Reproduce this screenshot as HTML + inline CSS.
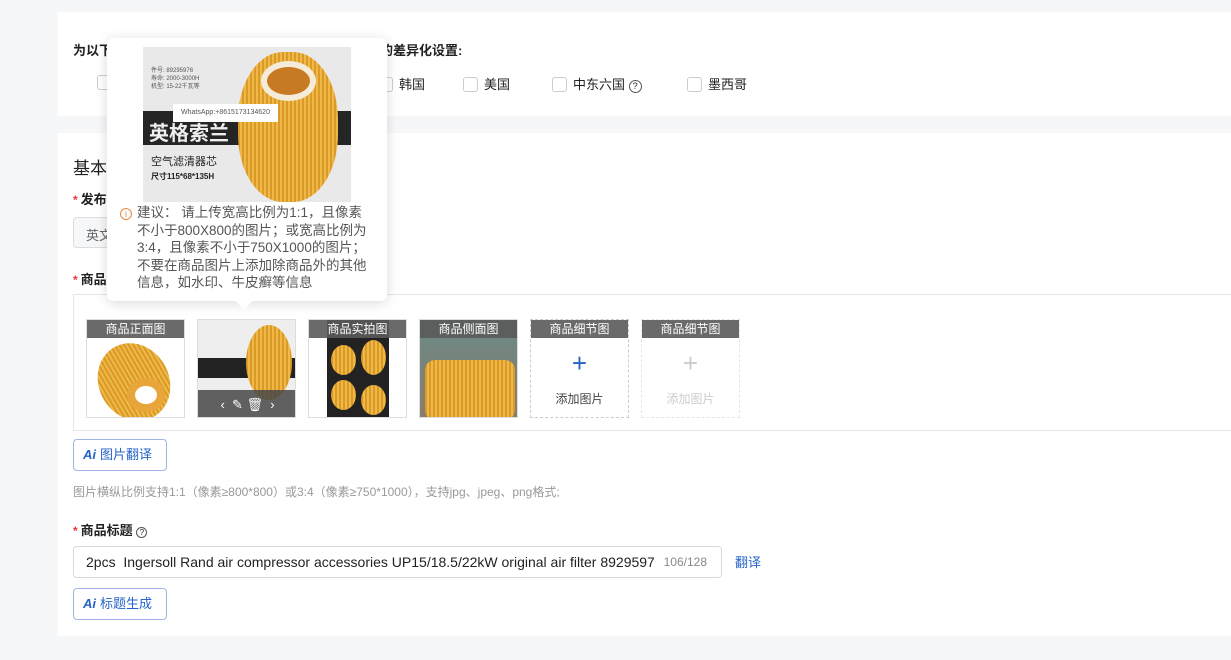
<!DOCTYPE html>
<html><head><meta charset="utf-8"><style>
*{box-sizing:border-box;margin:0;padding:0}
body{width:1231px;height:660px;overflow:hidden;background:#f6f7f9;font-family:"Liberation Sans","Noto Sans CJK SC",sans-serif;color:#222;position:relative}
.card{position:absolute;left:58px;right:0;background:#fff}
.abs{position:absolute}
.cb{display:inline-block;width:15px;height:15px;border:1px solid #c9ccd2;border-radius:3px;vertical-align:-3px;margin-right:6px}
.lbl{font-size:13px;font-weight:bold}
.star{color:#e33;font-size:12px;margin-right:3px}
.slot{position:absolute;top:319px;width:99px;height:99px;border:1px solid #ddd;overflow:hidden}
.slot .h{position:absolute;top:0;left:0;right:0;height:18px;background:rgba(90,90,90,.9);color:#fff;font-size:12px;text-align:center;line-height:18px}
.filt{position:absolute;border-radius:50%;background:repeating-linear-gradient(90deg,#d99a2a 0 2px,#f0b845 2px 4px)}
.ai{position:absolute;left:73px;width:94px;height:32px;border:1px solid #9fb4e8;border-radius:4px;color:#2563c9;font-size:13px;line-height:30px;padding-left:9px}
.ai b{font-style:italic;font-weight:bold;margin-right:4px}
</style></head><body>
<div class="card" style="top:12px;height:104px"></div>
<div class="card" style="top:133px;height:503px"></div>
<div class="abs lbl" style="left:73px;top:40px">为以下</div>
<div class="abs lbl" style="left:380px;top:40px">的差异化设置:</div>
<div class="abs" style="left:97px;top:74px"><span class="cb"></span></div>
<div class="abs" style="left:378px;top:74px;font-size:13px"><span class="cb"></span>韩国</div>
<div class="abs" style="left:463px;top:74px;font-size:13px"><span class="cb"></span>美国</div>
<div class="abs" style="left:552px;top:74px;font-size:13px"><span class="cb"></span>中东六国 <span style="display:inline-block;width:13px;height:13px;border:1px solid #555;border-radius:50%;font-size:9px;text-align:center;line-height:11px">?</span></div>
<div class="abs" style="left:687px;top:74px;font-size:13px"><span class="cb"></span>墨西哥</div>
<div class="abs" style="left:73px;top:154px;font-size:17px">基本</div>
<div class="abs lbl" style="left:73px;top:189px"><span class="star">*</span>发布</div>
<div class="abs" style="left:73px;top:217px;width:60px;height:31px;border:1px solid #ddd;border-radius:4px;background:#f6f7f9;font-size:13px;color:#666;padding:7px 12px;white-space:nowrap">英文</div>
<div class="abs lbl" style="left:73px;top:269px"><span class="star">*</span>商品</div>
<div class="abs" style="left:73px;top:294px;width:1160px;height:137px;border:1px solid #e5e6ea;border-right:none"></div>

<div class="slot" style="left:86px"><div class="filt" style="left:12px;top:22px;width:70px;height:80px;transform:rotate(-30deg)"></div><div class="filt" style="left:40px;top:58px;width:38px;height:34px;background:#fff;border:8px solid #e8a53a"></div><div class="h">商品正面图</div></div>
<div class="slot" style="left:197px;background:#eee"><div class="abs" style="left:0;top:38px;width:99px;height:20px;background:#222"></div><div class="filt" style="left:48px;top:5px;width:46px;height:75px"></div><div class="abs" style="left:0;top:70px;width:99px;height:29px;background:rgba(70,70,70,.85);color:#fff;font-size:13px;text-align:center;line-height:29px">‹ &nbsp;✎ 🗑&nbsp; ›</div></div>
<div class="slot" style="left:308px;background:#fff"><div class="abs" style="left:18px;top:0;width:62px;height:99px;background:#222"></div><div class="filt" style="left:22px;top:25px;width:25px;height:30px"></div><div class="filt" style="left:52px;top:20px;width:25px;height:35px"></div><div class="filt" style="left:22px;top:60px;width:25px;height:30px"></div><div class="filt" style="left:52px;top:65px;width:25px;height:30px"></div><div class="h">商品实拍图</div></div>
<div class="slot" style="left:419px;background:linear-gradient(#6a8a88,#8a7c6a)"><div class="filt" style="left:5px;top:40px;width:90px;height:60px;border-radius:10px"></div><div class="h">商品侧面图</div></div>
<div class="slot" style="left:530px;border:1px dashed #ccc"><div class="h">商品细节图</div><div class="abs" style="left:0;right:0;top:28px;text-align:center;font-size:26px;color:#2563c9">+</div><div class="abs" style="left:0;right:0;top:70px;text-align:center;font-size:12px;color:#444">添加图片</div></div>
<div class="slot" style="left:641px;border:1px dashed #e5e5e5"><div class="h">商品细节图</div><div class="abs" style="left:0;right:0;top:28px;text-align:center;font-size:26px;color:#ccc">+</div><div class="abs" style="left:0;right:0;top:70px;text-align:center;font-size:12px;color:#ccc">添加图片</div></div>

<div class="ai" style="top:439px"><b>Ai</b>图片翻译</div>
<div class="abs" style="left:73px;top:483px;font-size:12px;color:#999;white-space:nowrap">图片横纵比例支持1:1（像素≥800*800）或3:4（像素≥750*1000），支持jpg、jpeg、png格式;</div>
<div class="abs lbl" style="left:73px;top:520px"><span class="star">*</span>商品标题 <span style="display:inline-block;width:11px;height:11px;border:1px solid #555;border-radius:50%;font-size:8px;text-align:center;line-height:9px;font-weight:normal">?</span></div>
<div class="abs" style="left:73px;top:546px;width:649px;height:32px;border:1px solid #d6d8dd;border-radius:4px;font-size:14px;padding:7px 12px;white-space:nowrap;overflow:hidden">2pcs&nbsp; Ingersoll Rand air compressor accessories UP15/18.5/22kW original air filter 89295976<span style="position:absolute;right:0;top:0;background:#fff;padding:8px 14px 8px 10px;color:#888;font-size:12px">106/128</span></div>
<div class="abs" style="left:735px;top:552px;font-size:13px;color:#2563c9">翻译</div>
<div class="ai" style="top:588px"><b>Ai</b>标题生成</div>

<div class="abs" style="left:107px;top:38px;width:280px;height:263px;background:#fff;border-radius:6px;box-shadow:0 2px 12px rgba(0,0,0,.15)">
 <div class="abs" style="left:36px;top:9px;width:208px;height:155px;background:#e9e9e9;overflow:hidden">
  <div class="abs" style="left:8px;top:20px;font-size:6px;color:#555;line-height:8px">件号: 89295976<br>寿命: 2000-3000H<br>机型: 15-22千瓦等</div>
  <div class="abs" style="left:0;top:64px;width:208px;height:34px;background:#252525"></div>
  <div class="abs" style="left:6px;top:70px;font-size:20px;font-weight:bold;color:#eee">英格索兰</div>
  <div class="filt" style="left:95px;top:5px;width:100px;height:150px;border-radius:45%"></div>
  <div class="abs" style="left:118px;top:14px;width:55px;height:40px;border-radius:50%;background:#c77a22;border:6px solid #f4ecd8"></div>
  <div class="abs" style="left:30px;top:57px;width:105px;height:18px;background:#fff;font-size:7px;color:#555;text-align:center;line-height:18px">WhatsApp:+8615173134620</div>
  <div class="abs" style="left:8px;top:106px;font-size:11px;color:#222">空气滤清器芯</div>
  <div class="abs" style="left:8px;top:124px;font-size:8px;color:#222;font-weight:bold">尺寸115*68*135H</div>
 </div>
 <div class="abs" style="left:13px;top:170px;width:12px;height:12px;border:1px solid #e8873a;border-radius:50%;color:#e8873a;font-size:9px;text-align:center;line-height:10px">i</div>
 <div class="abs" style="left:30px;top:166px;width:238px;font-size:13.5px;line-height:17.5px;color:#555">建议： 请上传宽高比例为1:1，且像素不小于800X800的图片；或宽高比例为3:4，且像素不小于750X1000的图片；不要在商品图片上添加除商品外的其他信息，如水印、牛皮癣等信息</div>
 <div class="abs" style="left:131px;top:257px;width:12px;height:12px;background:#fff;transform:rotate(45deg)"></div>
</div>
</body></html>
